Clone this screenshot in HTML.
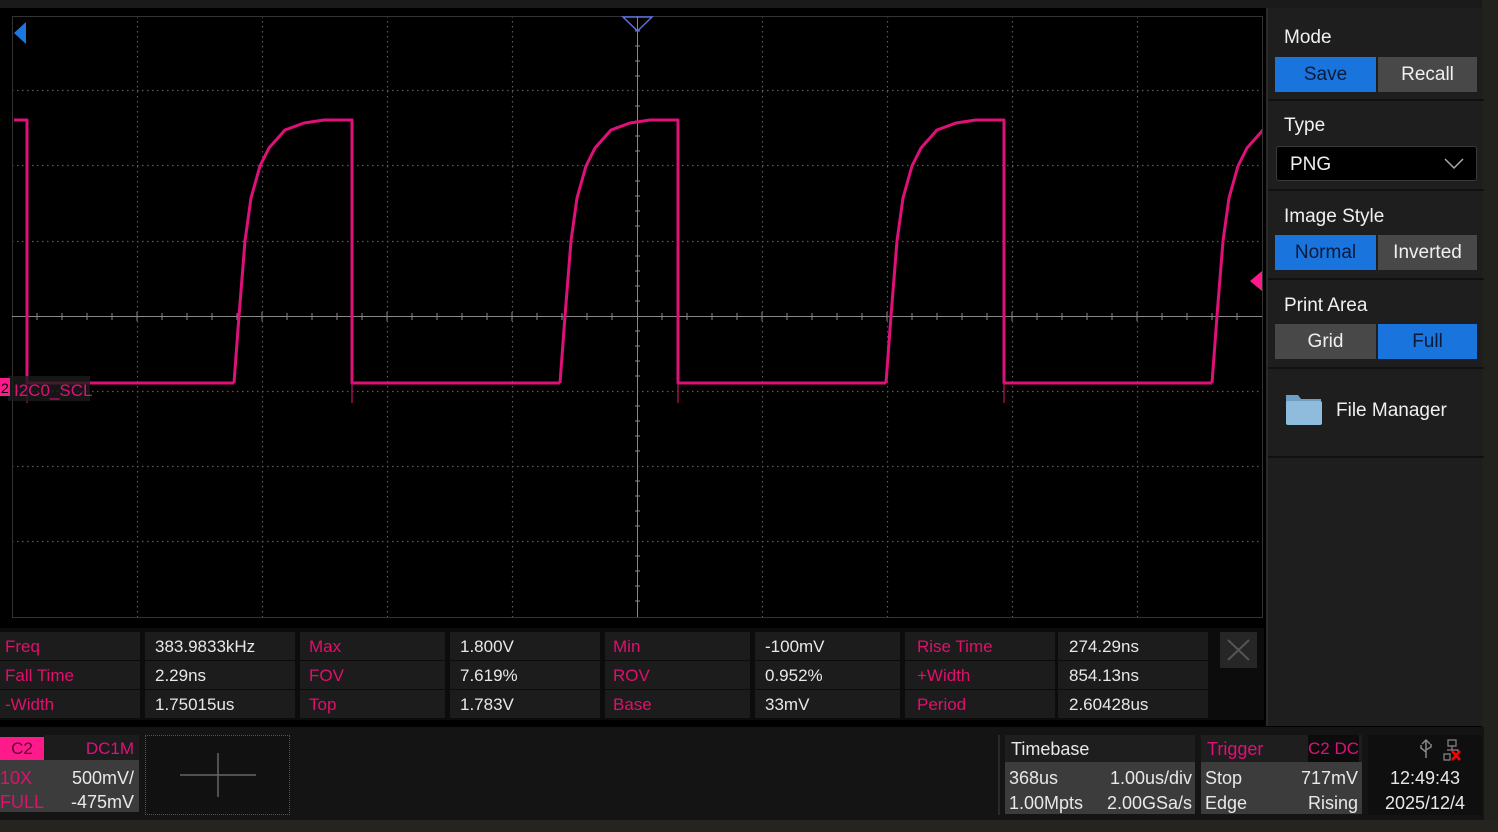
<!DOCTYPE html>
<html><head><meta charset="utf-8"><style>
*{margin:0;padding:0;box-sizing:border-box}
body{width:1498px;height:832px;background:#000;overflow:hidden;position:relative;font-family:"Liberation Sans",sans-serif;color:#e8e8e8}
.a{position:absolute}
.side{left:1266px;top:8px;width:216px;height:718px;background:#1e1e1e;border-left:2px solid #2a2a2a}
.lbl{font-size:19px;color:#f0f0f0;left:16px}
.btn{height:35px;font-size:19px;text-align:center;line-height:36px}
.blue{background:#1a74de;color:#0a1a3a}
.gray{background:#484848;color:#f0f0f0}
.sep{left:0;width:216px;height:2px;background:#111}
.mt{left:0;top:628px;width:1264px;height:92px;background:#0c0c0c}
.c{position:absolute;height:28px;background:#1c1c1c;font-size:17px;line-height:30px;padding-left:5px}
.m{color:#e0106c}
.bb{left:0;top:727px;width:1484px;height:93px;background:#141414}
</style></head><body>
<div class="a" style="left:0;top:0;width:1498px;height:8px;background:#1a1a1a"></div>
<div class="a" style="left:1482px;top:0;width:16px;height:832px;background:#22221c"></div>
<svg class="a" style="left:0;top:0" width="1266" height="625">
<g stroke="#5a5a5a" stroke-width="1.2" stroke-dasharray="1.5,3.5">
<line x1="137.5" y1="16" x2="137.5" y2="617"/><line x1="262.5" y1="16" x2="262.5" y2="617"/><line x1="387.5" y1="16" x2="387.5" y2="617"/><line x1="512.5" y1="16" x2="512.5" y2="617"/><line x1="762.5" y1="16" x2="762.5" y2="617"/><line x1="887.5" y1="16" x2="887.5" y2="617"/><line x1="1012.5" y1="16" x2="1012.5" y2="617"/><line x1="1137.5" y1="16" x2="1137.5" y2="617"/>
<line x1="12" y1="90.5" x2="1262" y2="90.5"/><line x1="12" y1="165.5" x2="1262" y2="165.5"/><line x1="12" y1="241.5" x2="1262" y2="241.5"/><line x1="12" y1="391.5" x2="1262" y2="391.5"/><line x1="12" y1="466.5" x2="1262" y2="466.5"/><line x1="12" y1="541.5" x2="1262" y2="541.5"/>
</g>
<rect x="12.5" y="16.5" width="1250" height="601" fill="none" stroke="#333"/>
<line x1="12" y1="316.5" x2="1262" y2="316.5" stroke="#888"/>
<line x1="637.5" y1="16" x2="637.5" y2="617" stroke="#888"/>
<g stroke="#888">
<path d="M37 313v7M62 313v7M87 313v7M112 313v7M137 312v9M162 313v7M187 313v7M212 313v7M237 313v7M262 312v9M287 313v7M312 313v7M337 313v7M362 313v7M387 312v9M412 313v7M437 313v7M462 313v7M487 313v7M512 312v9M537 313v7M562 313v7M587 313v7M612 313v7M662 313v7M687 313v7M712 313v7M737 313v7M762 312v9M787 313v7M812 313v7M837 313v7M862 313v7M887 312v9M912 313v7M937 313v7M962 313v7M987 313v7M1012 312v9M1037 313v7M1062 313v7M1087 313v7M1112 313v7M1137 312v9M1162 313v7M1187 313v7M1212 313v7M1237 313v7"/>
<path d="M635 31h5M635 46h5M635 61h5M635 76h5M635 106h5M635 121h5M635 136h5M635 151h5M635 181h5M635 196h5M635 211h5M635 226h5M635 256h5M635 271h5M635 286h5M635 301h5M635 331h5M635 346h5M635 361h5M635 376h5M635 406h5M635 421h5M635 436h5M635 451h5M635 481h5M635 496h5M635 511h5M635 526h5M635 556h5M635 571h5M635 586h5M635 601h5"/>
</g>
<path d="M623 17h29l-14.5 14z" fill="none" stroke="#5b6fdc" stroke-width="1.5"/>
<path d="M26 22v22l-12-11z" fill="#1a78e0"/>
<path d="M1262 271v20l-12-10z" fill="#ff1a8c"/>
<defs><clipPath id="cp"><rect x="12" y="16" width="1250" height="601"/></clipPath></defs>
<g clip-path="url(#cp)" fill="none" stroke-linejoin="round">
<g stroke="#e0107a" stroke-width="3">
<path d="M14 120H27V383H234 M234 383l5 -67l6 -75l6 -43l9 -32l9 -18l16 -18l19 -7l20 -3l28 0V383H560"/>
<path d="M560 383l5 -67l6 -75l6 -43l9 -32l9 -18l16 -18l19 -7l20 -3l28 0V383H886"/>
<path d="M886 383l5 -67l6 -75l6 -43l9 -32l9 -18l16 -18l19 -7l20 -3l28 0V383H1212"/>
<path d="M1212 383l5 -67l6 -75l6 -43l9 -32l9 -18l16 -18l19 -7l20 -3"/>
</g>
<g stroke="#c01060" stroke-width="1.2"><path d="M27 383v20M352 383v20M678 383v20M1004 383v20"/></g>
</g>
<rect x="8" y="376" width="82" height="25" fill="#1c1c1c" opacity="0.8"/>
<rect x="0" y="378" width="10" height="18" fill="#ff1a8c"/>
<text x="1" y="393" font-size="14" fill="#000" font-family="Liberation Sans">2</text>
<text x="14" y="396" font-size="17" fill="#e0107a" font-family="Liberation Sans">I2C0_SCL</text>
</svg>
<div class="a mt">
<div class="c m" style="left:0;top:4px;width:140px">Freq</div><div class="c" style="left:145px;top:4px;width:150px;padding-left:10px">383.9833kHz</div>
<div class="c m" style="left:300px;top:4px;width:145px;padding-left:9px">Max</div><div class="c" style="left:450px;top:4px;width:150px;padding-left:10px">1.800V</div>
<div class="c m" style="left:605px;top:4px;width:145px;padding-left:8px">Min</div><div class="c" style="left:755px;top:4px;width:145px;padding-left:10px">-100mV</div>
<div class="c m" style="left:905px;top:4px;width:150px;padding-left:12px">Rise Time</div><div class="c" style="left:1058px;top:4px;width:150px;padding-left:11px">274.29ns</div>
<div class="c m" style="left:0;top:33px;width:140px">Fall Time</div><div class="c" style="left:145px;top:33px;width:150px;padding-left:10px">2.29ns</div>
<div class="c m" style="left:300px;top:33px;width:145px;padding-left:9px">FOV</div><div class="c" style="left:450px;top:33px;width:150px;padding-left:10px">7.619%</div>
<div class="c m" style="left:605px;top:33px;width:145px;padding-left:8px">ROV</div><div class="c" style="left:755px;top:33px;width:145px;padding-left:10px">0.952%</div>
<div class="c m" style="left:905px;top:33px;width:150px;padding-left:12px">+Width</div><div class="c" style="left:1058px;top:33px;width:150px;padding-left:11px">854.13ns</div>
<div class="c m" style="left:0;top:62px;width:140px">-Width</div><div class="c" style="left:145px;top:62px;width:150px;padding-left:10px">1.75015us</div>
<div class="c m" style="left:300px;top:62px;width:145px;padding-left:9px">Top</div><div class="c" style="left:450px;top:62px;width:150px;padding-left:10px">1.783V</div>
<div class="c m" style="left:605px;top:62px;width:145px;padding-left:8px">Base</div><div class="c" style="left:755px;top:62px;width:145px;padding-left:10px">33mV</div>
<div class="c m" style="left:905px;top:62px;width:150px;padding-left:12px">Period</div><div class="c" style="left:1058px;top:62px;width:150px;padding-left:11px">2.60428us</div>
<div class="a" style="left:1220px;top:4px;width:37px;height:36px;background:#262626"><svg width="37" height="36"><path d="M8 8L29 28M29 8L8 28" stroke="#555" stroke-width="2"/></svg></div>
</div>
<div class="a side">
<div class="a lbl" style="top:19px">Mode</div>
<div class="a btn blue" style="left:7px;top:49px;width:101px">Save</div>
<div class="a btn gray" style="left:110px;top:49px;width:99px">Recall</div>
<div class="a sep" style="top:91px"></div>
<div class="a lbl" style="top:107px">Type</div>
<div class="a" style="left:8px;top:138px;width:201px;height:35px;background:#000;border:1px solid #3a3a3a;border-radius:3px;font-size:19px;line-height:35px;padding-left:13px;color:#f0f0f0">PNG<svg class="a" style="right:12px;top:11px" width="20" height="12"><path d="M1 1L10 10L19 1" stroke="#aaa" fill="none" stroke-width="1.5"/></svg></div>
<div class="a sep" style="top:181px"></div>
<div class="a lbl" style="top:198px">Image Style</div>
<div class="a btn blue" style="left:7px;top:227px;width:101px">Normal</div>
<div class="a btn gray" style="left:110px;top:227px;width:99px">Inverted</div>
<div class="a sep" style="top:270px"></div>
<div class="a lbl" style="top:287px">Print Area</div>
<div class="a btn gray" style="left:7px;top:316px;width:101px">Grid</div>
<div class="a btn blue" style="left:110px;top:316px;width:99px">Full</div>
<div class="a sep" style="top:359px"></div>
<svg class="a" style="left:16px;top:383px" width="42" height="36"><path d="M2 4h12l3 4h20v24H2z" fill="#6e9ec4"/><rect x="2" y="10" width="36" height="24" rx="2" fill="#8fbbdc"/></svg>
<div class="a" style="left:68px;top:392px;font-size:19px;color:#f0f0f0">File Manager</div>
<div class="a sep" style="top:448px"></div>
</div>
<div class="a bb">
<div class="a" style="left:0;top:10px;width:44px;height:23px;background:#ff1a8c;color:#600030;font-size:17px;line-height:24px;text-align:center">C2</div>
<div class="a" style="left:44px;top:8px;width:95px;height:25px;background:#1c1c1c;color:#e0107a;font-size:17px;line-height:28px;text-align:right;padding-right:5px">DC1M</div>
<div class="a" style="left:0;top:33px;width:139px;height:52px;background:#3c3c3c;font-size:18px;line-height:25px">
<span class="a m" style="left:0;top:6px">10X</span><span class="a" style="right:5px;top:6px">500mV/</span>
<span class="a m" style="left:0;top:30px">FULL</span><span class="a" style="right:5px;top:30px">-475mV</span></div>
<div class="a" style="left:145px;top:8px;width:145px;height:80px;border:1.5px dotted #555;background:#111"><svg width="142" height="77"><path d="M34 39h76M72 17v44" stroke="#666" stroke-width="1.5"/></svg></div>
<div class="a" style="left:998px;top:8px;width:2px;height:80px;background:#2a2a2a"></div>
<div class="a" style="left:1005px;top:8px;width:190px;height:27px;background:#1e1e1e;font-size:18px;line-height:28px;padding-left:6px">Timebase</div>
<div class="a" style="left:1005px;top:35px;width:190px;height:52px;background:#3c3c3c;font-size:18px">
<span class="a" style="left:4px;top:6px">368us</span><span class="a" style="right:3px;top:6px">1.00us/div</span>
<span class="a" style="left:4px;top:31px">1.00Mpts</span><span class="a" style="right:3px;top:31px">2.00GSa/s</span></div>
<div class="a" style="left:1201px;top:8px;width:161px;height:27px;background:#1e1e1e;font-size:18px;line-height:28px;padding-left:6px;color:#e0107a">Trigger<span class="a" style="right:3px;top:0;background:#0c0c0c;font-size:17px">C2 DC</span></div>
<div class="a" style="left:1201px;top:35px;width:161px;height:52px;background:#3c3c3c;font-size:18px">
<span class="a" style="left:4px;top:6px">Stop</span><span class="a" style="right:4px;top:6px">717mV</span>
<span class="a" style="left:4px;top:31px">Edge</span><span class="a" style="right:4px;top:31px">Rising</span></div>
<div class="a" style="left:1368px;top:8px;width:114px;height:80px;background:#0f0f0f;font-size:18px;text-align:center">
<svg class="a" style="left:48px;top:3px" width="50" height="24"><path d="M10 2v18M6 6l4-4 4 4M10 14l-5-4v-3M10 12l5-3v-3" stroke="#888" fill="none" stroke-width="1.5"/><path d="M32 2h8v6h-8zM28 16h6v6h-6zM36 8v4M31 12h11v4" stroke="#888" fill="none" stroke-width="1.2"/><path d="M36 13l8 9M44 13l-8 9" stroke="#f00" stroke-width="2.5"/></svg>
<div class="a" style="left:0;width:114px;top:33px">12:49:43</div>
<div class="a" style="left:0;width:114px;top:58px">2025/12/4</div></div>
</div>
<div class="a" style="left:0;top:820px;width:1498px;height:12px;background:#26241e"></div>
</body></html>
